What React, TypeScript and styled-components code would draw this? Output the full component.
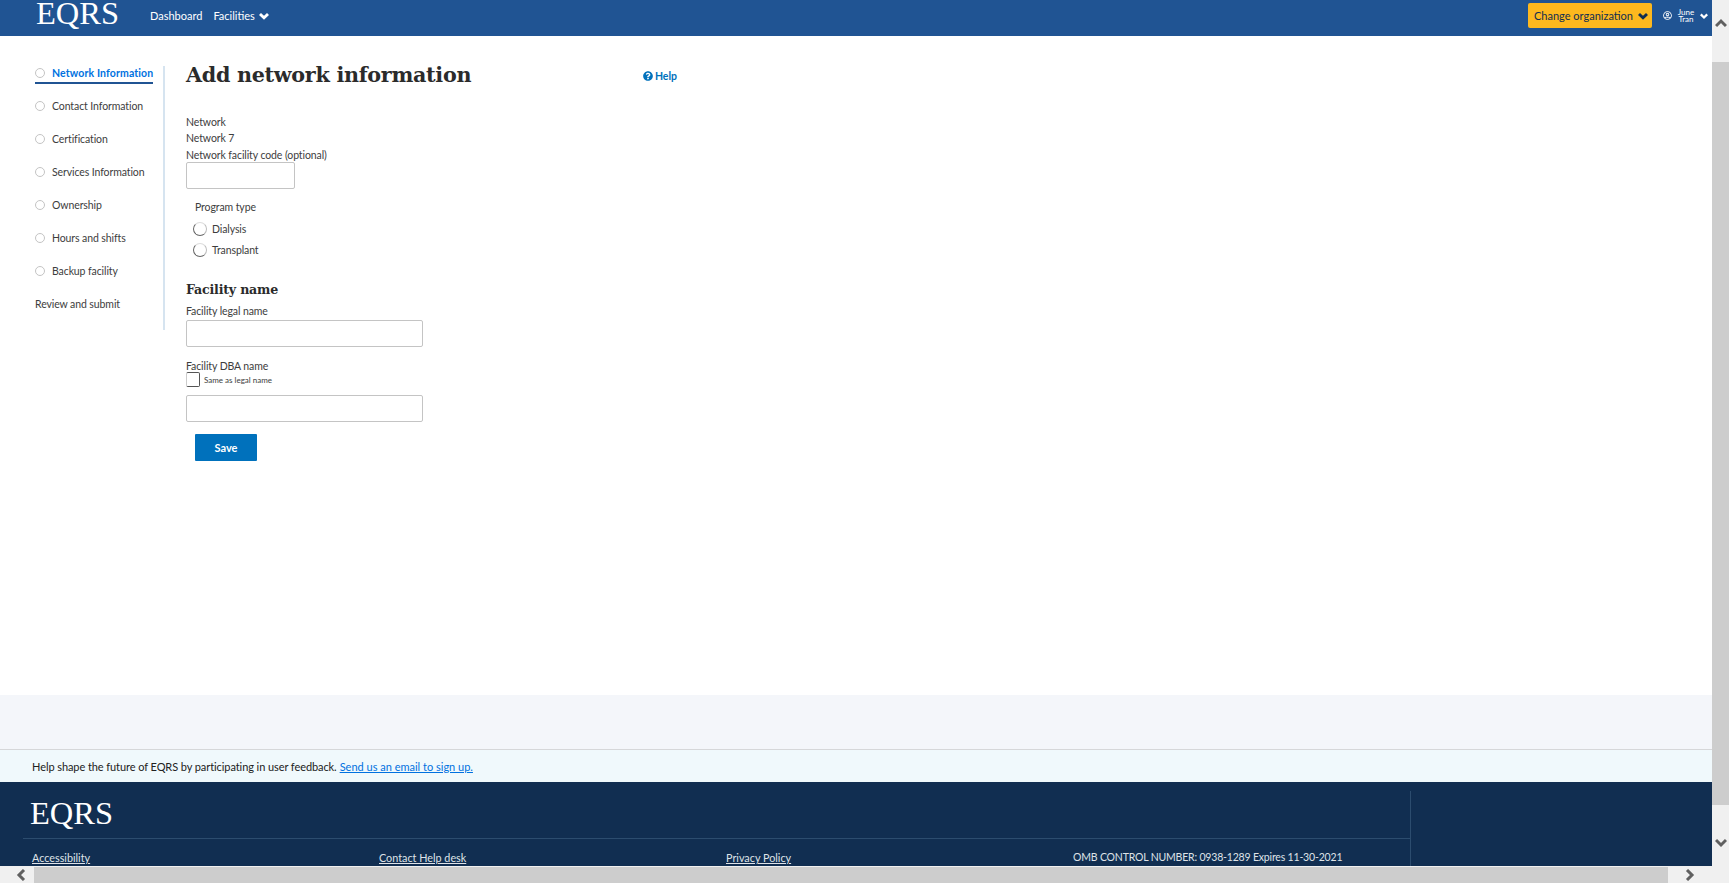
import React from "react";
import styled, { createGlobalStyle } from "styled-components";
import { FaQuestionCircle, FaRegUserCircle } from "react-icons/fa";

const Global = createGlobalStyle`
  html, body { margin: 0; padding: 0; height: 100%; overflow: hidden; background: #fff; }
  body { font-family: "Lato", "Liberation Sans", sans-serif; color: #212121; }
  #root { height: 100%; }
  * { box-sizing: border-box; }
`;
const Frame = styled.div`
  display: grid; grid-template-columns: 1712px 17px; grid-template-rows: 866px 17px; width: 1729px; height: 883px; overflow: hidden;
`;
const Viewport = styled.div`display: flex; flex-direction: column; overflow: hidden; height: 866px;`;
const Header = styled.header`
  flex: none; height: 36px; background: #205493; display: flex; align-items: center; padding: 0 4px 5px 36px; color: #fff;
`;
const Logo = styled.div`
  font-family: "Liberation Serif", serif; font-size: 32.5px; line-height: 0.8; color: #fff; width: 81px; white-space: nowrap;
`;
const HeaderLogo = styled(Logo)`align-self: flex-start; margin-right: 1px;`;
const NavLink = styled.a`
  font-size: 11px; color: #fff; margin-left: 11px; display: inline-flex; align-items: center; gap: 4px; white-space: nowrap;
`;
const FirstNav = styled(NavLink)`margin-left: 32px;`;
const Spacer = styled.div`flex: 1;`;
const OrgButton = styled.button`
  height: 25px; width: 124px; border: 0; border-radius: 2px; background: #fdb81e; color: #112e51; font: 11px "Lato", sans-serif; padding: 0 4px 0 6px;
  display: flex; align-items: center; justify-content: space-between; white-space: nowrap;
`;
const UserBox = styled.div`display: flex; align-items: center; margin-left: 11px; gap: 4px;`;
const UserName = styled.div`font-size: 8px; line-height: 7px; text-align: center; width: 20px;`;
const Body = styled.main`flex: none; height: 659px; display: flex; padding: 30px 0 0 35px; background: #fff;`;
const Side = styled.nav`
  width: 130px; height: 264px; border-right: 2px solid #d6e4f0; padding-right: 10px; flex: none;
`;
const ActiveStep = styled.div`
  height: 18px; margin-bottom: 13px; border-bottom: 2px solid #205493;
  display: flex; align-items: center; gap: 7px; font-size: 10.5px; font-weight: 700; color: #0071e0; white-space: nowrap; padding-bottom: 3px; letter-spacing: 0.13px;
`;
const PlainStep = styled.div`
  height: 17px; margin-bottom: 16px; display: flex; align-items: center; gap: 7px; font-size: 10.5px; color: #3d3d3d; white-space: nowrap; letter-spacing: -0.1px;
`;
const Dot = styled.span`width: 10px; height: 10px; border: 1px solid #c4c4c4; border-radius: 50%; flex: none;`;
const Content = styled.section`margin-left: 21px; width: 491px; flex: none;`;
const TitleRow = styled.div`display: flex; justify-content: space-between; align-items: center; height: 16px; margin-top: 1px;`;
const Title = styled.h1`
  margin: 0; font-family: "DejaVu Serif", serif; font-weight: 700; font-size: 20.7px; line-height: 16px; color: #2b2b2b; white-space: nowrap; letter-spacing: -0.3px;
`;
const Help = styled.a`
  color: #0071bc; font-size: 10.5px; font-weight: 700; display: inline-flex; align-items: center; gap: 2px; margin-top: 2px;
`;
const Text = styled.div<{ $top?: number; $left?: number }>`
  font-size: 10.5px; letter-spacing: -0.1px; line-height: 16px; color: #3d3d3d; margin-top: ${p => p.$top ?? 0}px; margin-left: ${p => p.$left ?? 0}px; white-space: nowrap;
`;
const Input = styled.div<{ $w: number; $top?: number }>`
  width: ${p => p.$w}px; height: 27px; border: 1px solid #c4c4c4; border-radius: 2px; margin-top: ${p => p.$top ?? 0}px; background: #fff;
`;
const RadioRow = styled.div<{ $top: number }>`display: flex; align-items: center; gap: 5px; margin: ${p => p.$top}px 0 0 7px; height: 15px;`;
const Radio = styled.span`
  width: 14px; height: 14px; border-radius: 50%; border: 1px solid; border-color: #dcdcdc #bbb #666 #666; flex: none;
`;
const Sub = styled.h2`
  margin: 24px 0 0; font-family: "DejaVu Serif", serif; font-size: 12.6px; line-height: 18px; font-weight: 700; color: #2b2b2b; letter-spacing: -0.2px;
`;
const CheckRow = styled.div`display: flex; align-items: center; gap: 4px; height: 15px; margin-top: -2px;`;
const Check = styled.span`
  width: 14px; height: 15px; border: 1px solid #555; border-left-color: #ccc; border-radius: 2px; flex: none;
`;
const CheckText = styled.span`font-size: 8px; color: #3d3d3d;`;
const Save = styled.button`
  display: block; width: 62px; height: 27px; margin: 12px 0 0 9px; border: 0; border-radius: 1px; background: #0071bc; color: #fff;
  font: 700 11px "Lato", sans-serif;
`;
const Band = styled.div`flex: none; height: 54px; background: #f4f6fa;`;
const Feedback = styled.div`
  flex: none; height: 33px; background: #f0f9fc; border-top: 1px solid #d6d7d9; padding-left: 32px; display: flex; align-items: center; font-size: 11px; letter-spacing: -0.08px; color: #212121; white-space: nowrap;
`;
const FeedbackLink = styled.a`color: #0071e0; text-decoration: underline; margin-left: 3px; letter-spacing: 0;`;
const Footer = styled.footer`flex: 1; min-height: 0; background: #112e51; padding: 9px 0 0 23px; overflow: hidden;`;
const FooterMain = styled.div`width: 1388px; height: 80px; border-right: 1px solid #2c4c6e;`;
const FooterLogoRow = styled.div`height: 48px; padding: 9px 0 0 7px; border-bottom: 1px solid #2c4c6e;`;
const FooterLinks = styled.div`display: grid; grid-template-columns: 347px 347px 347px 1fr; padding: 12px 0 0 9px; font-size: 10.8px; color: #dfe3e8; white-space: nowrap;`;
const FooterLink = styled.a`text-decoration: underline;`;
const Omb = styled.span`font-size: 10.5px; letter-spacing: -0.18px;`;
const VBar = styled.div`
  background: #f0f0f0; height: 866px; display: flex; flex-direction: column; align-items: center; justify-content: space-between; padding: 17px 0 17px;
`;
const VThumb = styled.div`width: 17px; height: 743px; background: #cdcdcd; flex: none;`;
const HBar = styled.div`background: #f0f0f0; display: flex; align-items: center; height: 17px; width: 1712px; padding: 0 16px 0 15px;`;
const HThumb = styled.div`flex: 1; height: 16px; background: #cdcdcd; margin: 0 16px 0 7px;`;
const Corner = styled.div`background: #f0f0f0;`;

const Chev = ({ d }: { d: string }) => (
  <svg width="12" height="12" viewBox="0 0 12 12" fill="none" stroke="#606060" strokeWidth="3"><path d={d} /></svg>
);
const Down = ({ size = 10 }: { size?: number }) => (
  <svg width={size} height={size} viewBox="0 0 12 12" fill="none" stroke="currentColor" strokeWidth="3.4"><path d="M1.2 3.5 L6 8.2 L10.8 3.5" /></svg>
);

const steps = ["Contact Information", "Certification", "Services Information", "Ownership", "Hours and shifts", "Backup facility"];

export default function App() {
  return (
    <Frame>
      <Global />
      <Viewport>
        <Header>
          <HeaderLogo>EQRS</HeaderLogo>
          <FirstNav>Dashboard</FirstNav>
          <NavLink>Facilities <Down /></NavLink>
          <Spacer />
          <OrgButton>Change organization <Down /></OrgButton>
          <UserBox>
            <FaRegUserCircle size={9} />
            <UserName>June<br />Tran</UserName>
            <Down size={8} />
          </UserBox>
        </Header>
        <Body>
          <Side>
            <ActiveStep><Dot />Network Information</ActiveStep>
            {steps.map(s => <PlainStep key={s}><Dot />{s}</PlainStep>)}
            <PlainStep>Review and submit</PlainStep>
          </Side>
          <Content>
            <TitleRow>
              <Title>Add network information</Title>
              <Help><FaQuestionCircle size={10} />Help</Help>
            </TitleRow>
            <Text $top={31}>Network</Text>
            <Text>Network 7</Text>
            <Text $top={1}>Network facility code (optional)</Text>
            <Input $w={109} $top={-1} />
            <Text $top={10} $left={9}>Program type</Text>
            <RadioRow $top={6}><Radio /><Text>Dialysis</Text></RadioRow>
            <RadioRow $top={6}><Radio /><Text>Transplant</Text></RadioRow>
            <Sub>Facility name</Sub>
            <Text $top={4}>Facility legal name</Text>
            <Input $w={237} $top={1} />
            <Text $top={11}>Facility DBA name</Text>
            <CheckRow><Check /><CheckText>Same as legal name</CheckText></CheckRow>
            <Input $w={237} $top={8} />
            <Save>Save</Save>
          </Content>
        </Body>
        <Band />
        <Feedback>Help shape the future of EQRS by participating in user feedback.<FeedbackLink>Send us an email to sign up.</FeedbackLink></Feedback>
        <Footer>
          <FooterMain>
            <FooterLogoRow><Logo>EQRS</Logo></FooterLogoRow>
            <FooterLinks>
              <FooterLink>Accessibility</FooterLink>
              <FooterLink>Contact Help desk</FooterLink>
              <FooterLink>Privacy Policy</FooterLink>
              <Omb>OMB CONTROL NUMBER: 0938-1289 Expires 11-30-2021</Omb>
            </FooterLinks>
          </FooterMain>
        </Footer>
      </Viewport>
      <VBar>
        <Chev d="M1 9 L6 4 L11 9" />
        <VThumb />
        <Chev d="M1 3 L6 8 L11 3" />
      </VBar>
      <HBar>
        <Chev d="M9 1 L4 6 L9 11" />
        <HThumb />
        <Chev d="M3 1 L8 6 L3 11" />
      </HBar>
      <Corner />
    </Frame>
  );
}
